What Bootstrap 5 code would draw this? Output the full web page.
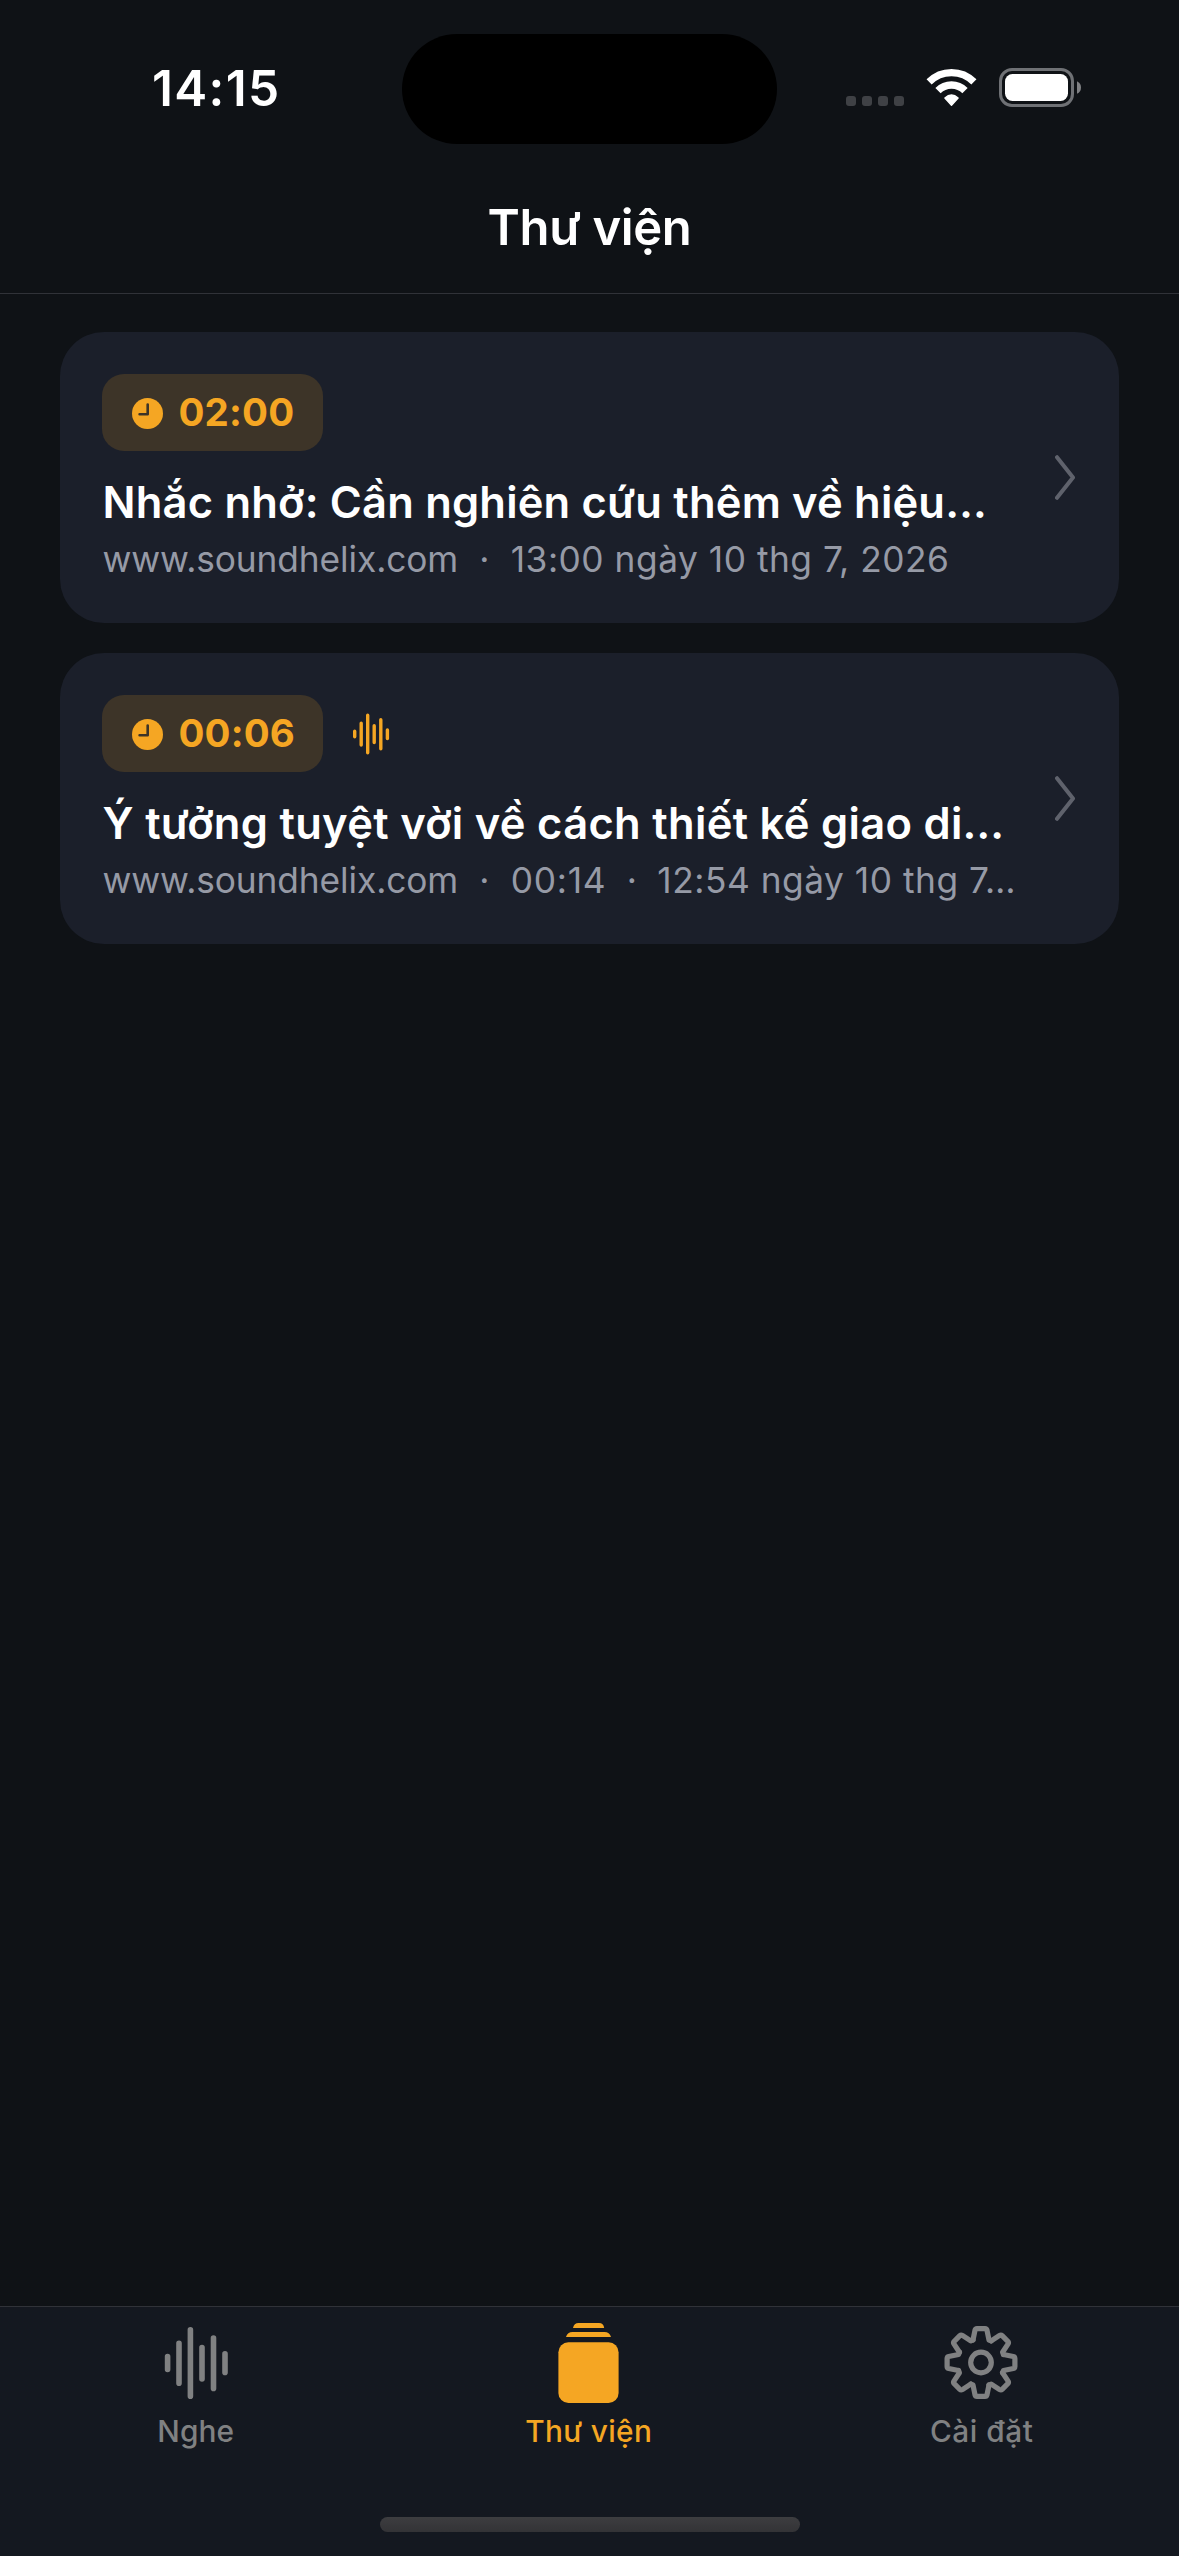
<!DOCTYPE html>
<html lang="vi" data-bs-theme="dark">
<head>
<meta charset="utf-8">
<meta name="viewport" content="width=device-width, initial-scale=1">
<title>Thư viện</title>
<link rel="stylesheet" href="https://cdn.jsdelivr.net/npm/bootstrap@5.3.0/dist/css/bootstrap.min.css">
<style>
  :root { --amber: #f5a623; --ink: #f5f6f8; --muted: #969aa6; --off: #808182; }
  body { background: #0f1216; color: var(--ink); font-family: Inter, "Noto Sans", sans-serif; }
  svg { display: block; flex: none; overflow: visible; }
  .screen { height: 2556px; overflow: hidden; }

  .status-bar { height: 162px; padding-top: 14px; color: #fff; }
  .status-time { width: 402px; padding-left: 152px; font-size: 49.5px; font-weight: 600; line-height: 60px; letter-spacing: 1.35px; }
  .island { width: 375px; height: 110px; background: #000; margin-top: 2px; }
  .status-icons { margin-left: 69px; margin-top: -1px; }
  .cell-dots { gap: 6px; margin-top: 27px; }
  .cell-dots i { width: 10px; height: 10px; border-radius: 3px; background: #3f4145; }

  .title-bar { height: 132px; border-bottom: 1px solid #303238; }
  .title-bar h1 { font-size: 49px; font-weight: 600; line-height: 60px; letter-spacing: -.37px; }

  .clips { padding: 38px 60px 0; gap: 30px; }
  .clip { height: 291px; background: #1b1f2a; border-radius: 44px; padding: 42px 44px 42px 42px; }
  .clip-time { width: 221px; height: 77px; padding-left: 30px; gap: 15.5px; border-radius: 22px; background: #3d3428; color: var(--amber); font-size: 38.5px; font-weight: 700; letter-spacing: .15px; }
  .clip-head { gap: 30px; margin-bottom: 24px; color: var(--amber); }
  .clip-title { font-size: 43.5px; font-weight: 600; line-height: 54px; letter-spacing: .18px; margin-bottom: 9px; padding-left: .6px; }
  .clip-title-b { letter-spacing: .3px; }
  .clip-meta { font-size: 35.3px; line-height: 43px; color: var(--muted); letter-spacing: .52px; padding-left: .4px; }
  .clip-meta .host { letter-spacing: -.1px; }
  .clip-meta .len { letter-spacing: .75px; }
  .clip-meta .sep { width: 52.5px; letter-spacing: 0; }

  .tab-strip { height: 250px; background: #141820; border-top: 1px solid #303238; }
  .tab-strip .nav { padding-top: 16px; }
  .tab-strip .nav-link { padding: 0 1.6px 0 0; color: var(--off); font-size: 29.8px; font-weight: 500; line-height: 36px; }
  .tab-strip .nav-link.active { color: var(--amber); }
  .tab-icon { height: 80px; margin-bottom: 10px; }
  .tab-listen { letter-spacing: .1px; }
  .tab-library { letter-spacing: .35px; }
  .tab-settings { letter-spacing: .55px; }
  .home-line { width: 420px; height: 15px; border-radius: 8px; background: linear-gradient(#3d3d40, #333336); margin: auto auto 24px; }
</style>
</head>
<body>
<svg width="0" height="0" class="position-absolute" aria-hidden="true">
  <symbol id="clock" viewBox="0 0 31 31">
    <circle cx="15.5" cy="15.5" r="15.5" fill="#f5a623"/>
    <path d="M15.7 6.6V16.3H7.6" fill="none" stroke="#3d3428" stroke-width="2.6" stroke-linecap="round" stroke-linejoin="round"/>
  </symbol>
  <symbol id="chevron" viewBox="0 0 20 45">
    <path d="M2 2.2 18 22.5 2 42.8" fill="none" stroke="#5f626c" stroke-width="4" stroke-linecap="round" stroke-linejoin="round"/>
  </symbol>
</svg>

<div class="screen d-flex flex-column">
  <header>
    <div class="status-bar d-flex align-items-center">
      <div class="status-time">14:15</div>
      <div class="island rounded-pill"></div>
      <div class="status-icons d-flex align-items-center">
        <div class="cell-dots d-flex"><i></i><i></i><i></i><i></i></div>
        <svg width="51" height="37" viewBox="-25.5 -35 51 37" style="margin-left:22px">
          <g fill="none" stroke="#fff">
            <path d="M-22.4-22.1A31.5 31.5 0 0 1 22.4-22.1" stroke-width="7.2"/>
            <path d="M-13.5-13.3A19 19 0 0 1 13.5-13.3" stroke-width="7.4"/>
          </g>
          <path d="M-6.6-6Q0-11.8 6.6-6L0 1.2Z" fill="#fff" stroke="#fff" stroke-width="1.4" stroke-linejoin="round"/>
        </svg>
        <svg width="82" height="39" viewBox="0 0 82 39" style="margin-left:22px">
          <rect x="1.5" y="1.5" width="72" height="36" rx="11.5" fill="none" stroke="#6f7175" stroke-width="3"/>
          <rect x="6" y="6" width="63" height="27" rx="7.5" fill="#fff"/>
          <path d="M78 13.2Q82 15.200 82 19.500Q82 23.800 78 25.800Z" fill="#808184"/>
        </svg>
      </div>
    </div>
    <div class="title-bar d-flex align-items-center justify-content-center">
      <h1 class="m-0">Thư viện</h1>
    </div>
  </header>

  <main class="clips d-flex flex-column flex-grow-1">
    <article class="clip d-flex align-items-center justify-content-between">
      <div class="text-nowrap">
        <div class="clip-head d-flex align-items-center">
          <div class="clip-time d-flex align-items-center">
            <svg width="31" height="31" style="margin-top:2px"><use href="#clock"/></svg><span>02:00</span>
          </div>
        </div>
        <h2 class="clip-title">Nhắc nhở: Cần nghiên cứu thêm về hiệu…</h2>
        <div class="clip-meta d-flex"><span class="host">www.soundhelix.com</span><span class="sep text-center">·</span><span>13:00 ngày 10 thg 7, 2026</span></div>
      </div>
      <svg width="20" height="45"><use href="#chevron"/></svg>
    </article>

    <article class="clip d-flex align-items-center justify-content-between">
      <div class="text-nowrap">
        <div class="clip-head d-flex align-items-center">
          <div class="clip-time d-flex align-items-center">
            <svg width="31" height="31" style="margin-top:2px"><use href="#clock"/></svg><span>00:06</span>
          </div>
          <svg width="37" height="42" viewBox="0 0 37 42" fill="none" stroke="currentColor" stroke-width="3.4" stroke-linecap="round">
            <path d="M1.700 18.200v5.600M8.200 10.200v21.800M14.700 2.200v37.600M21.200 12.700v16.800M27.800 6.700v29M34.400 17v8.600"/>
          </svg>
        </div>
        <h2 class="clip-title clip-title-b">Ý tưởng tuyệt vời về cách thiết kế giao di…</h2>
        <div class="clip-meta d-flex"><span class="host">www.soundhelix.com</span><span class="sep text-center">·</span><span class="len">00:14</span><span class="sep text-center" style="width:51px">·</span><span>12:54 ngày 10 thg 7…</span></div>
      </div>
      <svg width="20" height="45"><use href="#chevron"/></svg>
    </article>
  </main>

  <footer class="tab-strip d-flex flex-column">
    <nav class="nav nav-fill">
      <a class="nav-link col-4 tab-listen" href="#">
        <span class="tab-icon d-flex align-items-center justify-content-center">
          <svg width="63" height="72" viewBox="-.8 0 63 72" fill="none" stroke="currentColor" stroke-width="5.600" stroke-linecap="round">
            <path d="M2.800 29.500v13M14.200 16.200v40M25.600 2.800v66.400M37.200 20.600v31.400M48.700 11v50.400M60.200 26.800v18.600"/>
          </svg>
        </span>Nghe
      </a>
      <a class="nav-link col-4 tab-library active" href="#">
        <span class="tab-icon d-flex align-items-center justify-content-center">
          <svg width="61" height="80" viewBox="0 0 61 80" fill="currentColor">
            <path d="M15 5Q16 0 20.500 0H41Q45.500 0 46.200 5ZM8 14Q9.500 9 14.500 9H46.500Q51.500 9 53 14Z"/>
            <rect x=".4" y="19.200" width="60.200" height="60.800" rx="10"/>
          </svg>
        </span>Thư viện
      </a>
      <a class="nav-link col-4 tab-settings" href="#">
        <span class="tab-icon d-flex align-items-center justify-content-center">
          <svg width="74" height="74" viewBox="-36 -36.500 74 74" fill="none" stroke="currentColor" stroke-width="5.200" stroke-linejoin="round" stroke-linecap="round">
            <circle r="10.300"/>
            <path id="tooth" d="M-8-22.500-6-32.300Q-5.600-33.900-4-33.900H4Q5.600-33.900 6-32.300L8-22.500 10.250-21.600"/>
            <use href="#tooth" transform="rotate(45)"/><use href="#tooth" transform="rotate(90)"/><use href="#tooth" transform="rotate(135)"/><use href="#tooth" transform="rotate(180)"/><use href="#tooth" transform="rotate(225)"/><use href="#tooth" transform="rotate(270)"/><use href="#tooth" transform="rotate(315)"/>
          </svg>
        </span>Cài đặt
      </a>
    </nav>
    <div class="home-line"></div>
  </footer>
</div>
<script src="https://cdn.jsdelivr.net/npm/bootstrap@5.3.0/dist/js/bootstrap.bundle.min.js"></script>
</body>
</html>
